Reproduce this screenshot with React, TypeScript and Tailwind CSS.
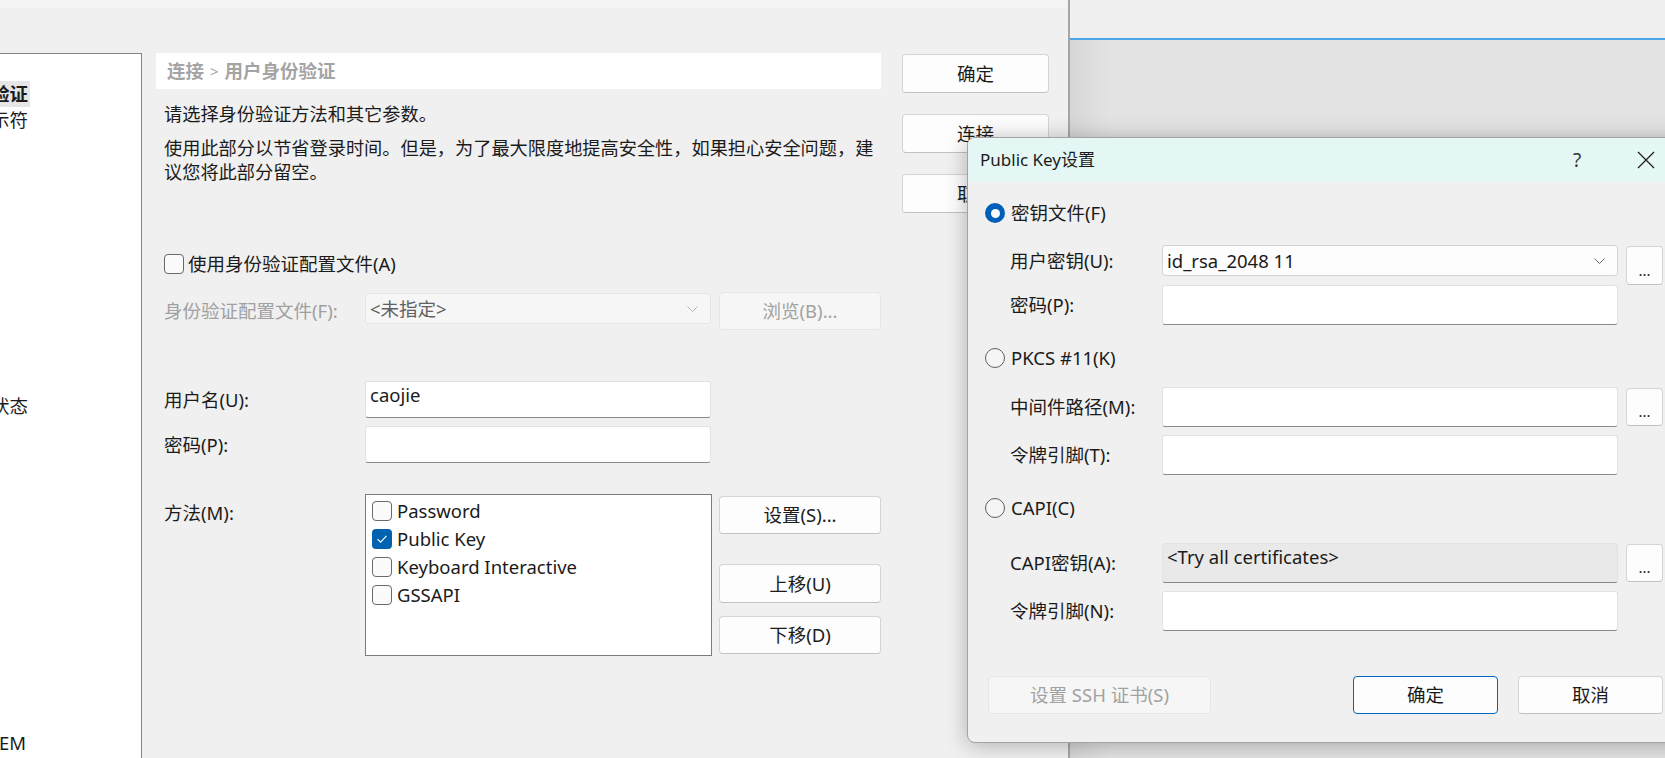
import React from "react";

const FONT = "font-['Segoe_UI','Noto_Sans','Noto_Sans_CJK_SC',sans-serif]";

function CheckBox({ checked = false }: { checked?: boolean }) {
  if (checked) {
    return (
      <div className="w-[20px] h-[20px] shrink-0 rounded-[4px] bg-[#0063b1] flex items-center justify-center">
        <svg width="12" height="10" viewBox="0 0 12 10" fill="none">
          <path d="M1.5 5.2 L4.6 8.2 L10.5 1.8" stroke="white" strokeWidth="1.1" />
        </svg>
      </div>
    );
  }
  return <div className="w-[20px] h-[20px] shrink-0 rounded-[4px] border border-[#6a6a6a] bg-[#fbfbfb]" />;
}

function Radio({ checked = false }: { checked?: boolean }) {
  if (checked) {
    return (
      <div className="w-[20px] h-[20px] shrink-0 rounded-full bg-[#005fb8] flex items-center justify-center">
        <div className="w-[9px] h-[9px] rounded-full bg-white" />
      </div>
    );
  }
  return <div className="w-[20px] h-[20px] shrink-0 rounded-full border border-[#5f5f5f] bg-[#f5f5f5]" />;
}

function Button({ label, className = "", disabled = false }: { label: string; className?: string; disabled?: boolean }) {
  return (
    <div
      className={
        "flex items-center justify-center rounded-[4px] border " +
        (disabled
          ? "bg-[#f6f6f6] border-[#e6e6e6] text-[#a2a2a2] "
          : "bg-[#fdfdfd] border-[#d4d4d4] border-b-[#c2c2c2] text-[#1b1b1b] ") +
        className
      }
    >
      {label}
    </div>
  );
}

function DotsButton({ className = "" }: { className?: string }) {
  return (
    <div className={"w-[37px] rounded-[4px] border border-[#d4d4d4] border-b-[#c2c2c2] bg-[#fdfdfd] flex items-end justify-center pb-[6px] text-[15px] leading-[16px] " + className}>
      ...
    </div>
  );
}

function TextBox({ value = "", className = "", gray = false }: { value?: string; className?: string; gray?: boolean }) {
  return (
    <div
      className={
        "rounded-[3px] border border-[#e2e2e2] border-b-[#8a8a8a] px-[4px] pt-[1px] whitespace-nowrap " +
        (gray ? "bg-[#e9e9e9] " : "bg-white ") +
        className
      }
    >
      {value}
    </div>
  );
}

function Combo({ value, className = "", disabled = false }: { value: string; className?: string; disabled?: boolean }) {
  return (
    <div
      className={
        "flex items-center rounded-[3px] border px-[4px] " +
        (disabled ? "bg-[#f6f6f6] border-[#e6e6e6] text-[#616161] " : "bg-[#fdfdfd] border-[#d2d2d2] ") +
        className
      }
    >
      <span className="flex-1">{value}</span>
      <svg width="11" height="6" viewBox="0 0 11 6" fill="none" className="mr-[8px]">
        <path d="M0.5 0.5 L5.5 5.5 L10.5 0.5" stroke={disabled ? "#b5b5b5" : "#6a6a6a"} strokeWidth="1" />
      </svg>
    </div>
  );
}

function TreeItem({ text, className = "", bold = false, hl = false, pr = "pr-[2px]" }: { text: string; className?: string; bold?: boolean; hl?: boolean; pr?: string }) {
  return (
    <div className={"h-[26px] flex items-center " + className}>
      <div
        className={
          "w-[30px] h-full flex items-center justify-end overflow-hidden whitespace-nowrap " +
          pr +
          " " +
          (hl ? "bg-[#e6e6e6] " : "") +
          (bold ? "font-bold" : "")
        }
      >
        {text}
      </div>
    </div>
  );
}

function Tree() {
  return (
    <div className="w-[142px] shrink-0 bg-white border-t border-r border-[#838383] flex flex-col">
      <TreeItem text="用户身份验证" bold hl className="mt-[27px]" />
      <TreeItem text="登录提示符" />
      <TreeItem text="连接状态" className="mt-[260px]" />
      <TreeItem text="SYSTEM" pr="pr-[4px]" className="mt-[311px]" />
    </div>
  );
}

function Content() {
  return (
    <div className="ml-[14px] w-[725px] shrink-0 flex flex-col">
      <div className="h-[36px] bg-white flex items-center pl-[11px] font-bold text-[#a4a4a4]">
        连接 <span className="mx-[6px] font-normal text-[15px]">&gt;</span> 用户身份验证
      </div>
      <div className="pl-[8px] mt-[13px] text-[18.2px]">请选择身份验证方法和其它参数。</div>
      <div className="pl-[8px] mt-[10px] w-[724px] text-[18.2px]">
        使用此部分以节省登录时间。但是，为了最大限度地提高安全性，如果担心安全问题，建议您将此部分留空。
      </div>
      <div className="pl-[8px] mt-[68px] flex items-center gap-[4px]">
        <CheckBox />
        <span>使用身份验证配置文件(A)</span>
      </div>
      <div className="pl-[8px] mt-[16px] h-[38px] flex items-center">
        <div className="w-[201px] text-[#a0a0a0]">身份验证配置文件(F):</div>
        <Combo value="<未指定>" disabled className="w-[346px] h-[31px] self-start mt-[1px]" />
        <Button label="浏览(B)..." disabled className="ml-[8px] w-[162px] h-[38px]" />
      </div>
      <div className="pl-[8px] mt-[51px] h-[37px] flex items-center">
        <div className="w-[201px]">用户名(U):</div>
        <TextBox value="caojie" className="w-[346px] h-[37px]" />
      </div>
      <div className="pl-[8px] mt-[8px] h-[37px] flex items-center">
        <div className="w-[201px]">密码(P):</div>
        <TextBox className="w-[346px] h-[37px]" />
      </div>
      <div className="pl-[8px] mt-[31px] flex items-start">
        <div className="w-[201px] pt-[7px]">方法(M):</div>
        <div className="w-[347px] h-[162px] bg-white border border-[#7c7c7c] pt-[2px] pl-[6px] flex flex-col">
          {[
            ["Password", false],
            ["Public Key", true],
            ["Keyboard Interactive", false],
            ["GSSAPI", false],
          ].map(([t, c]) => (
            <div key={t as string} className="h-[28px] flex items-center gap-[5px]">
              <CheckBox checked={c as boolean} />
              <span>{t as string}</span>
            </div>
          ))}
        </div>
        <div className="ml-[7px] flex flex-col">
          <Button label="设置(S)..." className="w-[162px] h-[38px] mt-[2px]" />
          <Button label="上移(U)" className="w-[162px] h-[39px] mt-[30px]" />
          <Button label="下移(D)" className="w-[162px] h-[38px] mt-[13px]" />
        </div>
      </div>
    </div>
  );
}

function MainButtons() {
  return (
    <div className="ml-[21px] w-[147px] flex flex-col">
      <Button label="确定" className="h-[39px] mt-[1px]" />
      <Button label="连接" className="h-[39px] mt-[21px]" />
      <Button label="取消" className="h-[39px] mt-[21px]" />
    </div>
  );
}

function FieldRow({
  label,
  className = "",
  children,
}: {
  label: string;
  className?: string;
  children: React.ReactNode;
}) {
  return (
    <div className={"flex items-center pl-[42px] " + className}>
      <div className="w-[152px]">{label}</div>
      {children}
    </div>
  );
}

function Popup() {
  return (
    <div className="absolute left-[967px] top-[137px] w-[726px] h-[606px] rounded-[8px] border border-[#a3a3a3] bg-[#f0f0f0] shadow-[0_2px_22px_rgba(0,0,0,0.28)] overflow-hidden flex flex-col">
      <div className="h-[44px] bg-[#e4f7f5] flex items-center pl-[12px] text-[17px]">
        <span className="flex-1">Public Key设置</span>
        <span className="w-[20px] text-center text-[19px] text-[#333]">?</span>
        <svg width="18" height="18" viewBox="0 0 18 18" className="ml-[50px] mr-[37px]">
          <path d="M1 1 L17 17 M17 1 L1 17" stroke="#1b1b1b" strokeWidth="1.2" />
        </svg>
      </div>

      <div className="mt-[19px] pl-[17px] h-[24px] flex items-center gap-[6px]">
        <Radio checked />
        <span>密钥文件(F)</span>
      </div>
      <div className="mt-[20px] flex items-start pl-[42px] h-[40px]">
        <div className="w-[152px] mt-[4px]">用户密钥(U):</div>
        <Combo value="id_rsa_2048 11" className="w-[456px] h-[31px]" />
        <DotsButton className="ml-[8px] h-[39px] mt-[1px]" />
      </div>
      <FieldRow label="密码(P):" className="h-[40px]">
        <TextBox className="w-[456px] h-[40px]" />
      </FieldRow>

      <div className="mt-[21px] pl-[17px] h-[24px] flex items-center gap-[6px]">
        <Radio />
        <span>PKCS #11(K)</span>
      </div>
      <FieldRow label="中间件路径(M):" className="mt-[17px] h-[40px]">
        <TextBox className="w-[456px] h-[40px]" />
        <DotsButton className="ml-[8px] h-[38px]" />
      </FieldRow>
      <FieldRow label="令牌引脚(T):" className="mt-[8px] h-[40px]">
        <TextBox className="w-[456px] h-[40px]" />
      </FieldRow>

      <div className="mt-[21px] pl-[17px] h-[24px] flex items-center gap-[6px]">
        <Radio />
        <span>CAPI(C)</span>
      </div>
      <FieldRow label="CAPI密钥(A):" className="mt-[23px] h-[40px]">
        <TextBox gray value="<Try all certificates>" className="w-[456px] h-[40px]" />
        <DotsButton className="ml-[8px] h-[38px]" />
      </FieldRow>
      <FieldRow label="令牌引脚(N):" className="mt-[8px] h-[40px]">
        <TextBox className="w-[456px] h-[40px]" />
      </FieldRow>

      <div className="mt-[45px] flex pl-[20px]">
        <Button label="设置 SSH 证书(S)" disabled className="w-[223px] h-[38px]" />
        <Button label="确定" className="ml-[142px] w-[145px] h-[38px] !border-[#0067c0]" />
        <Button label="取消" className="ml-[20px] w-[145px] h-[38px]" />
      </div>
    </div>
  );
}

export default function App() {
  return (
    <div className={"relative w-[1665px] h-[758px] overflow-hidden bg-[#f0f0f0] flex text-[18.5px] leading-[24px] text-[#1b1b1b] " + FONT}>
      <div className="w-[1070px] h-full shrink-0 border-r-2 border-[#a6a6a6] flex flex-col">
        <div className="h-[8px] bg-[#f4f4f4]" />
        <div className="mt-[45px] flex flex-1 min-h-0">
          <Tree />
          <Content />
          <MainButtons />
        </div>
      </div>
      <div className="flex-1 flex flex-col">
        <div className="h-[38px] bg-[#f0f0f0]" />
        <div className="h-[2px] bg-[#4aa5e9]" />
        <div className="flex-1 bg-[linear-gradient(90deg,#d6d6d6_0px,#e3e3e3_40px,#e3e3e3_100%)]" />
      </div>
      <Popup />
    </div>
  );
}
